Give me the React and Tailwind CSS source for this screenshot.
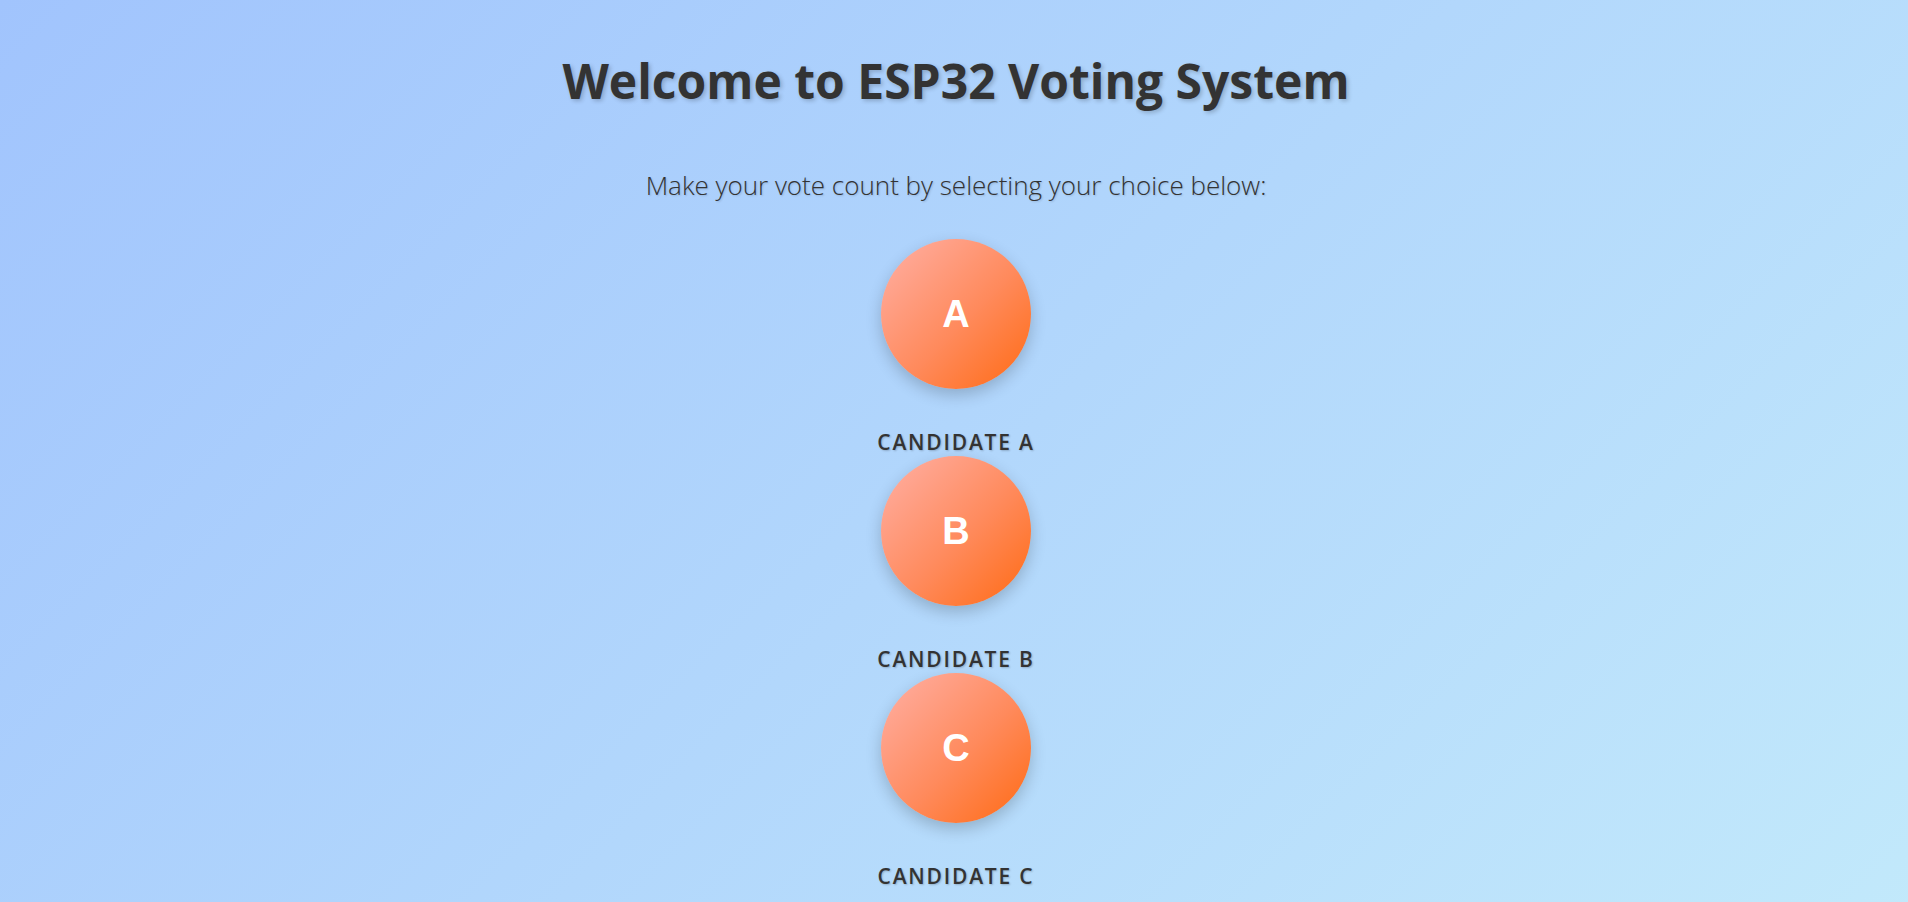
const candidates = [
  { letter: 'A', name: 'Candidate A' },
  { letter: 'B', name: 'Candidate B' },
  { letter: 'C', name: 'Candidate C' },
];

function CandidateButton({ letter, name }) {
  return (
    <div className="flex flex-col items-center">
      <button
        className="w-[150px] h-[150px] rounded-full flex items-center justify-center bg-[linear-gradient(135deg,#ffb0a6_0%,#ff8a5c_55%,#ff6a12_100%)] shadow-[0_6px_16px_rgba(0,0,0,0.2)] text-white text-[38px] font-bold font-['Liberation_Sans',Arial,sans-serif] cursor-pointer"
      >
        {letter}
      </button>
      <span className="mt-[40px] leading-[27px] text-[21px] font-semibold uppercase tracking-[1.8px] text-[#333] font-['Open_Sans',sans-serif] [text-shadow:1px_1px_2px_rgba(0,0,0,0.2)]">
        {name}
      </span>
    </div>
  );
}

export default function App() {
  return (
    <div className="min-h-screen w-full bg-[linear-gradient(135deg,#a1c4fd_0%,#c2e9fb_100%)] font-['Open_Sans',sans-serif]">
      <div className="flex flex-col items-center pt-[54px] pb-10 pl-[4px]">
        <h1 className="text-[48px] leading-[54px] font-bold text-[#333] [text-shadow:2px_2px_4px_rgba(0,0,0,0.2)]">
          Welcome to ESP32 Voting System
        </h1>
        <p className="mt-[62px] text-[26px] leading-[30px] font-light text-[#333] [text-shadow:1px_1px_2px_rgba(0,0,0,0.15)]">
          Make your vote count by selecting your choice below:
        </p>
        <div className="mt-[39px] flex flex-col items-center">
          {candidates.map((c) => (
            <CandidateButton key={c.letter} letter={c.letter} name={c.name} />
          ))}
        </div>
      </div>
    </div>
  );
}
